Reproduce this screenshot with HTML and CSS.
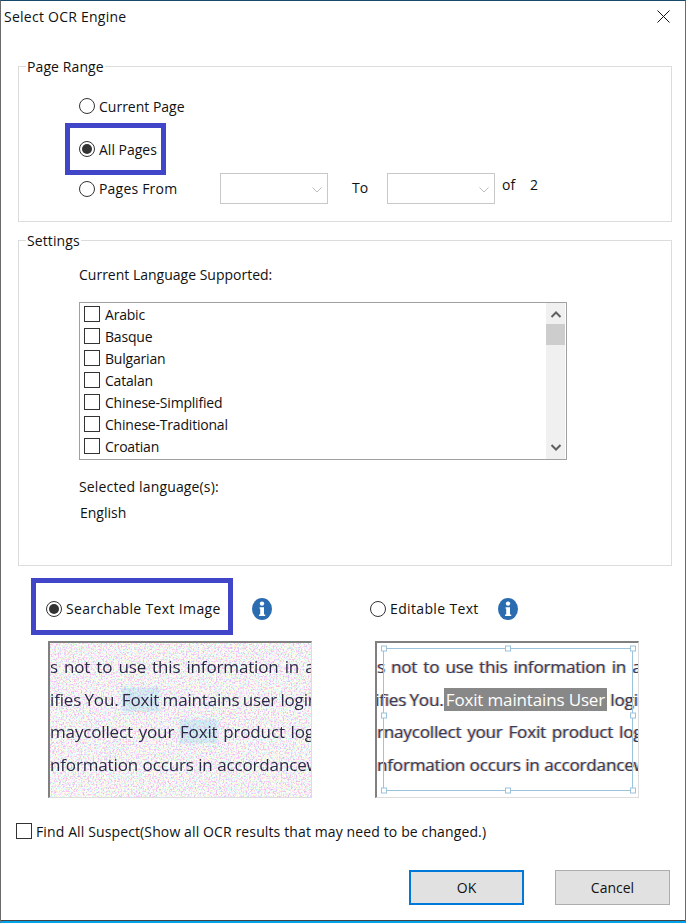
FILE: index.html
```html
<!DOCTYPE html>
<html lang="en">
<head>
<meta charset="utf-8">
<title>Select OCR Engine</title>
<link rel="stylesheet" href="styles.css">
</head>
<body>
<svg class="defs" width="0" height="0" aria-hidden="true">
  <filter id="noise" x="0" y="0" width="100%" height="100%" color-interpolation-filters="sRGB">
    <feTurbulence type="fractalNoise" baseFrequency="0.6" numOctaves="2" seed="7"/>
    <feColorMatrix type="matrix" values="4.5 0 0 0 -1.45  0 4.5 0 0 -1.45  0 0 4.5 0 -1.45  0 0 0 0 1"/>
    <feComponentTransfer>
      <feFuncR type="linear" slope="0.2" intercept="0.82"/>
      <feFuncG type="linear" slope="0.24" intercept="0.77"/>
      <feFuncB type="linear" slope="0.16" intercept="0.84"/>
    </feComponentTransfer>
  </filter>
</svg>
<main class="dialog">
  <header class="titlebar">
    <span>Select OCR Engine</span>
    <svg class="close" width="13" height="13" viewBox="0 0 13 13"><path d="M0.5 0.5 12.5 12.5M12.5 0.5 0.5 12.5" stroke="#111" stroke-width="1" fill="none"/></svg>
  </header>

  <fieldset class="group page-range">
    <legend>Page Range</legend>
    <label class="radio-row first"><input type="radio" name="range"><span>Current Page</span></label>
    <label class="radio-row second"><input type="radio" name="range" checked><span>All Pages</span></label>
    <div class="range-row">
      <label class="radio-from"><input type="radio" name="range"><span>Pages From</span></label>
      <div class="combo"><svg width="10" height="6" viewBox="0 0 10 6"><path d="M0.5 0.5 5 5 9.5 0.5" stroke="#bdbdbd" fill="none"/></svg></div>
      <span class="to">To</span>
      <div class="combo"><svg width="10" height="6" viewBox="0 0 10 6"><path d="M0.5 0.5 5 5 9.5 0.5" stroke="#bdbdbd" fill="none"/></svg></div>
      <span class="of">of</span>
      <span class="total">2</span>
    </div>
    <div class="mark mark-all"></div>
  </fieldset>

  <fieldset class="group settings">
    <legend>Settings</legend>
    <div class="supported">Current Language Supported:</div>
    <div class="listbox">
      <ul class="langs">
        <li><input type="checkbox"><span>Arabic</span></li>
        <li><input type="checkbox"><span>Basque</span></li>
        <li><input type="checkbox"><span>Bulgarian</span></li>
        <li><input type="checkbox"><span>Catalan</span></li>
        <li><input type="checkbox"><span>Chinese-Simplified</span></li>
        <li><input type="checkbox"><span>Chinese-Traditional</span></li>
        <li><input type="checkbox"><span>Croatian</span></li>
      </ul>
      <div class="scrollbar">
        <svg class="arrow" width="10" height="7" viewBox="0 0 10 7"><path d="M0.5 6 5 1.5 9.5 6" stroke="#606060" stroke-width="2" fill="none"/></svg>
        <div class="thumb"></div>
        <svg class="arrow down" width="10" height="7" viewBox="0 0 10 7"><path d="M0.5 1 5 5.5 9.5 1" stroke="#606060" stroke-width="2" fill="none"/></svg>
      </div>
    </div>
    <div class="selected-label">Selected language(s):</div>
    <div class="selected-value">English</div>
  </fieldset>

  <section class="modes">
    <div class="mode searchable">
      <div class="mode-head">
        <label class="mode-label"><input type="radio" name="mode" checked><span>Searchable Text Image</span></label>
        <svg class="info" width="20" height="22" viewBox="0 0 20 22"><ellipse cx="10" cy="11" rx="10" ry="11" fill="#2b6cb0"/><ellipse cx="10" cy="5.6" rx="2.2" ry="2.2" fill="#fff"/><path d="M7.6 9.2H12V16.4H13.2V18H7V16.4H8.2V10.8H7.6Z" fill="#fff"/></svg>
      </div>
      <div class="sample noisy">
        <svg class="noise-layer" width="264" height="157"><rect width="264" height="157" filter="url(#noise)"/></svg>
        <div class="doc">
          <div class="l1">s not to use this information in a</div>
          <div class="l2">ifies You. <b class="glow">Foxit</b> maintains user login</div>
          <div class="l3">maycollect your <b class="glow">Foxit</b> product log</div>
          <div class="l4">nformation occurs in accordancew</div>
        </div>
      </div>
    </div>
    <div class="mode editable">
      <div class="mode-head">
        <label class="mode-label"><input type="radio" name="mode"><span>Editable Text</span></label>
        <svg class="info" width="20" height="22" viewBox="0 0 20 22"><ellipse cx="10" cy="11" rx="10" ry="11" fill="#2b6cb0"/><ellipse cx="10" cy="5.6" rx="2.2" ry="2.2" fill="#fff"/><path d="M7.6 9.2H12V16.4H13.2V18H7V16.4H8.2V10.8H7.6Z" fill="#fff"/></svg>
      </div>
      <div class="sample clean">
        <div class="doc">
          <div class="l1">s not to use this information in a</div>
          <div class="l2 shifted">ifies You. <b class="picked">Foxit maintains User</b> login</div>
          <div class="l3">rnaycollect your Foxit product log</div>
          <div class="l4">nformation occurs in accordancew</div>
        </div>
        <svg class="frame" width="264" height="157" viewBox="0 0 264 157">
          <rect x="8.5" y="7.5" width="249" height="142" fill="none" stroke="#9cc3dc"/>
          <g fill="#fff" stroke="#9cc3dc">
            <rect x="6.5" y="5" width="5" height="5"/><rect x="130.5" y="5" width="5" height="5"/><rect x="255.5" y="5" width="5" height="5"/>
            <rect x="6.5" y="72" width="5" height="5"/><rect x="255.5" y="72" width="5" height="5"/>
            <rect x="6.5" y="147" width="5" height="5"/><rect x="130.5" y="147" width="5" height="5"/><rect x="255.5" y="147" width="5" height="5"/>
          </g>
        </svg>
      </div>
    </div>
    <div class="mark mark-search"></div>
  </section>

  <label class="suspect"><input type="checkbox"><span>Find All Suspect(Show all OCR results that may need to be changed.)</span></label>

  <footer class="actions">
    <button class="btn default" type="button">OK</button>
    <button class="btn" type="button">Cancel</button>
  </footer>
</main>
</body>
</html>
```

FILE: styles.css
```css
* { box-sizing: border-box; }
html, body { margin: 0; padding: 0; background: #fff; }
body { font-family: "Open Sans", "Liberation Sans", sans-serif; font-size: 14px; line-height: 20px; color: #111; }
.defs { position: absolute; }

.dialog {
  position: relative;
  width: 686px;
  height: 923px;
  overflow: hidden;
  border-top: 1px solid #17496b;
  border-left: 1px solid #6b6b6b;
  border-right: 1px solid #6b6b6b;
  border-bottom: 2px solid #00a2e8;
  box-shadow: inset 0 -1px 0 #444;
  display: flex;
  flex-direction: column;
}

.titlebar {
  height: 32px;
  flex: none;
  display: flex;
  justify-content: space-between;
  padding: 6px 15px 0 3px;
  letter-spacing: 0.25px;
}
.close { margin-top: 3px; }

.group {
  margin: 0 13px 0 17px;
  padding: 0;
  min-width: 0;
  border: 1px solid #dcdcdc;
  position: relative;
}
.group legend { margin-left: 7px; padding: 0 1px; height: 21px; line-height: 21px; letter-spacing: 0.1px; }
.page-range { margin-top: 23px; height: 166px; padding-bottom: 17px; }
.settings { margin-top: 8px; height: 336px; }

input[type="radio"], input[type="checkbox"] {
  appearance: none;
  margin: 0;
  flex: none;
  background: #fff;
  border: 1px solid #333;
}
input[type="radio"] {
  width: 16px;
  height: 16px;
  border-radius: 50%;
  display: grid;
  place-items: center;
}
input[type="radio"]:checked::before {
  content: "";
  width: 10px;
  height: 10px;
  border-radius: 50%;
  background: #333;
}
input[type="checkbox"] { width: 16px; height: 16px; border-radius: 0; }

.radio-row, .radio-from, .mode-label, .suspect { display: flex; align-items: center; gap: 4px; }
.radio-row span, .radio-from span, .suspect span, .langs span { padding-top: 1px; }
.radio-row { height: 24px; margin-left: 60px; }
.radio-row.first { margin-top: 17px; }
.radio-row.second { margin-top: 19px; }
.range-row { display: flex; align-items: center; height: 31px; margin: 12px 0 0 60px; }
.radio-from { width: 141px; letter-spacing: 0.2px; }
.combo {
  width: 108px;
  height: 31px;
  border: 1px solid #c8c8c8;
  display: flex;
  align-items: center;
  justify-content: flex-end;
  padding: 2px 5px 0 0;
  flex: none;
}
.to { width: 59px; padding-left: 24px; margin-top: -2px; }
.of { margin: -8px 0 0 7px; width: 28px; }
.total { margin-top: -8px; }

.mark { position: absolute; border: 5px solid #4146c8; pointer-events: none; }
.mark-all { left: 46px; top: 46px; width: 101px; height: 52px; }

.supported { margin: 14px 0 0 60px; }
.listbox {
  margin: 17px 0 0 60px;
  width: 488px;
  height: 158px;
  border: 1px solid #a0a0a0;
  display: flex;
  justify-content: space-between;
}
.langs { list-style: none; margin: 0; padding: 0 0 0 4px; letter-spacing: -0.2px; }
.langs li { height: 22px; display: flex; align-items: center; gap: 5px; margin-top: 0; }
.scrollbar {
  width: 19px;
  margin-right: 1px;
  background: #f0f0f0;
  display: flex;
  flex-direction: column;
  align-items: center;
  padding-top: 8px;
}
.thumb { width: 19px; height: 21px; background: #cdcdcd; margin-top: 6px; }
.arrow { flex: none; }
.arrow.down { margin-top: auto; margin-bottom: 8px; }
.selected-label { margin: 17px 0 0 60px; letter-spacing: 0.15px; }
.selected-value { margin: 6px 0 0 61px; }

.modes { position: relative; display: flex; padding-left: 45px; margin-top: 32px; }
.mode { width: 324px; flex: none; letter-spacing: 0.35px; }
.mode-head { height: 22px; display: flex; align-items: center; }
.searchable .mode-label { width: 206px; }
.editable .mode-label { width: 128px; }
.mark-search { left: 30px; top: -20px; width: 202px; height: 57px; }

.sample {
  position: relative;
  width: 264px;
  height: 157px;
  margin-top: 21px;
  overflow: hidden;
  border-style: solid;
  border-width: 2px 1px 1px 2px;
  border-color: #808080 #ddd #ddd #808080;
}
.noisy { margin-left: 2px; }
.clean { margin-left: 5px; }
.noise-layer { position: absolute; left: -2px; top: -2px; }
.doc {
  position: relative;
  padding-top: 8px;
  font-size: 17px;
  letter-spacing: -0.15px;
  line-height: 32.7px;
  white-space: nowrap;
}
.l1 { word-spacing: 1.8px; }
.l2 { word-spacing: -1px; }
.l3 { word-spacing: 1.5px; }
.l4 { word-spacing: 0.3px; }
.shifted { margin-left: -2px; }
.doc b { font-weight: 400; }
.noisy .doc { color: #2a2a44; filter: blur(0.4px); }
.clean .doc { color: #3a3a55; text-shadow: -1px 0 rgba(240,160,70,.55), 1px 0 rgba(70,130,220,.45); }
.glow { background: rgba(130,205,235,.28); box-shadow: 0 0 4px rgba(130,205,235,.3); }
.picked {
  display: inline-block;
  background: #888;
  color: #fff;
  text-shadow: none;
  line-height: 23px;
  padding: 0 2px;
  margin-left: -3px;
  word-spacing: 0;
}
.frame { position: absolute; left: -2px; top: -2px; }

.suspect { margin: 23px 0 0 15px; height: 20px; letter-spacing: 0.12px; }
.actions { display: flex; justify-content: flex-end; gap: 31px; margin: 29px 15px 0 0; }
.btn {
  width: 115px;
  height: 35px;
  font: inherit;
  color: #111;
  background: #e1e1e1;
  border: 1px solid #adadad;
  padding: 0;
}
.btn.default { border: 2px solid #0078d7; }
```
